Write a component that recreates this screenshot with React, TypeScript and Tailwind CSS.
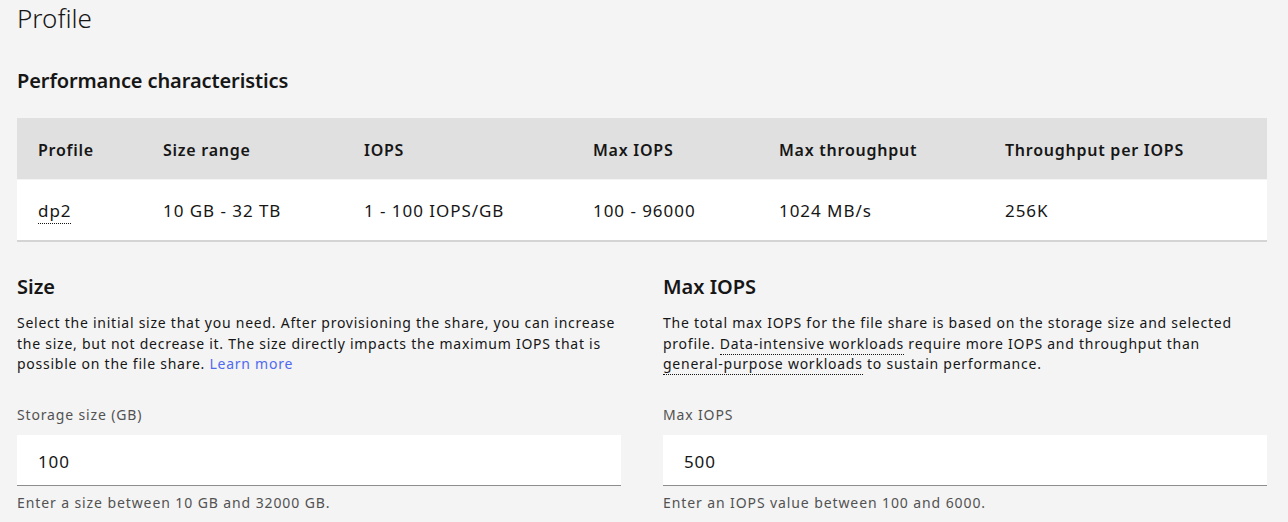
import React from "react";

const cols = "grid grid-cols-[125px_201px_229px_186px_226px_1fr]";

function Dotted({ children }: { children: React.ReactNode }) {
  return (
    <span className="whitespace-nowrap border-b border-dotted border-[#161616] pb-[1px]">{children}</span>
  );
}

export default function App() {
  return (
    <div className="min-h-[522px] w-full bg-[#f4f4f4] pl-[17px] pr-[21px] font-['Noto_Sans',sans-serif] text-[#161616]">
      <h1 className="text-[26px] font-light leading-[36px]">Profile</h1>
      <h2 className="mt-[31px] text-[20px] font-semibold leading-[28px] tracking-[-0.1px]">Performance characteristics</h2>

      <div className="mt-[23px] w-full">
        <div className={`${cols} h-[61px] items-center bg-[#e0e0e0] pt-[2px] text-[16px] font-semibold tracking-[0.75px]`}>
          <div className="pl-[21px]">Profile</div>
          <div className="pl-[21px]">Size range</div>
          <div className="pl-[21px]">IOPS</div>
          <div className="pl-[21px]">Max IOPS</div>
          <div className="pl-[21px]">Max throughput</div>
          <div className="pl-[21px]">Throughput per IOPS</div>
        </div>
        <div className={`${cols} mt-px h-[62px] items-center border-b-2 border-[#d4d4d4] bg-white pt-[1px] text-[17px] tracking-[0.95px]`}>
          <div className="pl-[21px]">
            <Dotted>dp2</Dotted>
          </div>
          <div className="pl-[21px]">10 GB - 32 TB</div>
          <div className="pl-[21px]">1 - 100 IOPS/GB</div>
          <div className="pl-[21px]">100 - 96000</div>
          <div className="pl-[21px]">1024 MB/s</div>
          <div className="pl-[21px]">256K</div>
        </div>
      </div>

      <div className="mt-[31px] grid grid-cols-2 gap-x-[42px]">
        <section className="flex flex-col">
          <h3 className="text-[20px] font-semibold leading-[28px]">Size</h3>
          <p className="mt-[12px] h-[62px] text-[14px] leading-[20.5px] tracking-[0.75px]">
            Select the initial size that you need. After provisioning the share, you can increase the size, but not
            decrease it. The size directly impacts the maximum IOPS that is possible on the file share.{" "}
            <a className="text-[#4f6af0]">Learn more</a>
          </p>
          <label className="mt-[30px] text-[14px] leading-[20px] tracking-[0.85px] text-[#525252]">Storage size (GB)</label>
          <div className="mt-[10px] flex h-[51px] items-center border-b border-[#8d8d8d] bg-white pl-[21px] pt-[3px] text-[17px] tracking-[0.9px]">
            100
          </div>
          <p className="mt-[7px] text-[14px] leading-[20px] tracking-[0.9px] text-[#525252]">
            Enter a size between 10 GB and 32000 GB.
          </p>
        </section>

        <section className="flex flex-col">
          <h3 className="text-[20px] font-semibold leading-[28px]">Max IOPS</h3>
          <p className="mt-[12px] h-[62px] text-[14px] leading-[20.5px] tracking-[0.75px]">
            The total max IOPS for the file share is based on the storage size and selected profile.{" "}
            <Dotted>Data-intensive workloads</Dotted> require more IOPS and throughput than{" "}
            <Dotted>general-purpose workloads</Dotted> to sustain performance.
          </p>
          <label className="mt-[30px] text-[14px] leading-[20px] tracking-[0.85px] text-[#525252]">Max IOPS</label>
          <div className="mt-[10px] flex h-[51px] items-center border-b border-[#8d8d8d] bg-white pl-[21px] pt-[3px] text-[17px] tracking-[0.9px]">
            500
          </div>
          <p className="mt-[7px] text-[14px] leading-[20px] tracking-[0.9px] text-[#525252]">
            Enter an IOPS value between 100 and 6000.
          </p>
        </section>
      </div>
    </div>
  );
}
